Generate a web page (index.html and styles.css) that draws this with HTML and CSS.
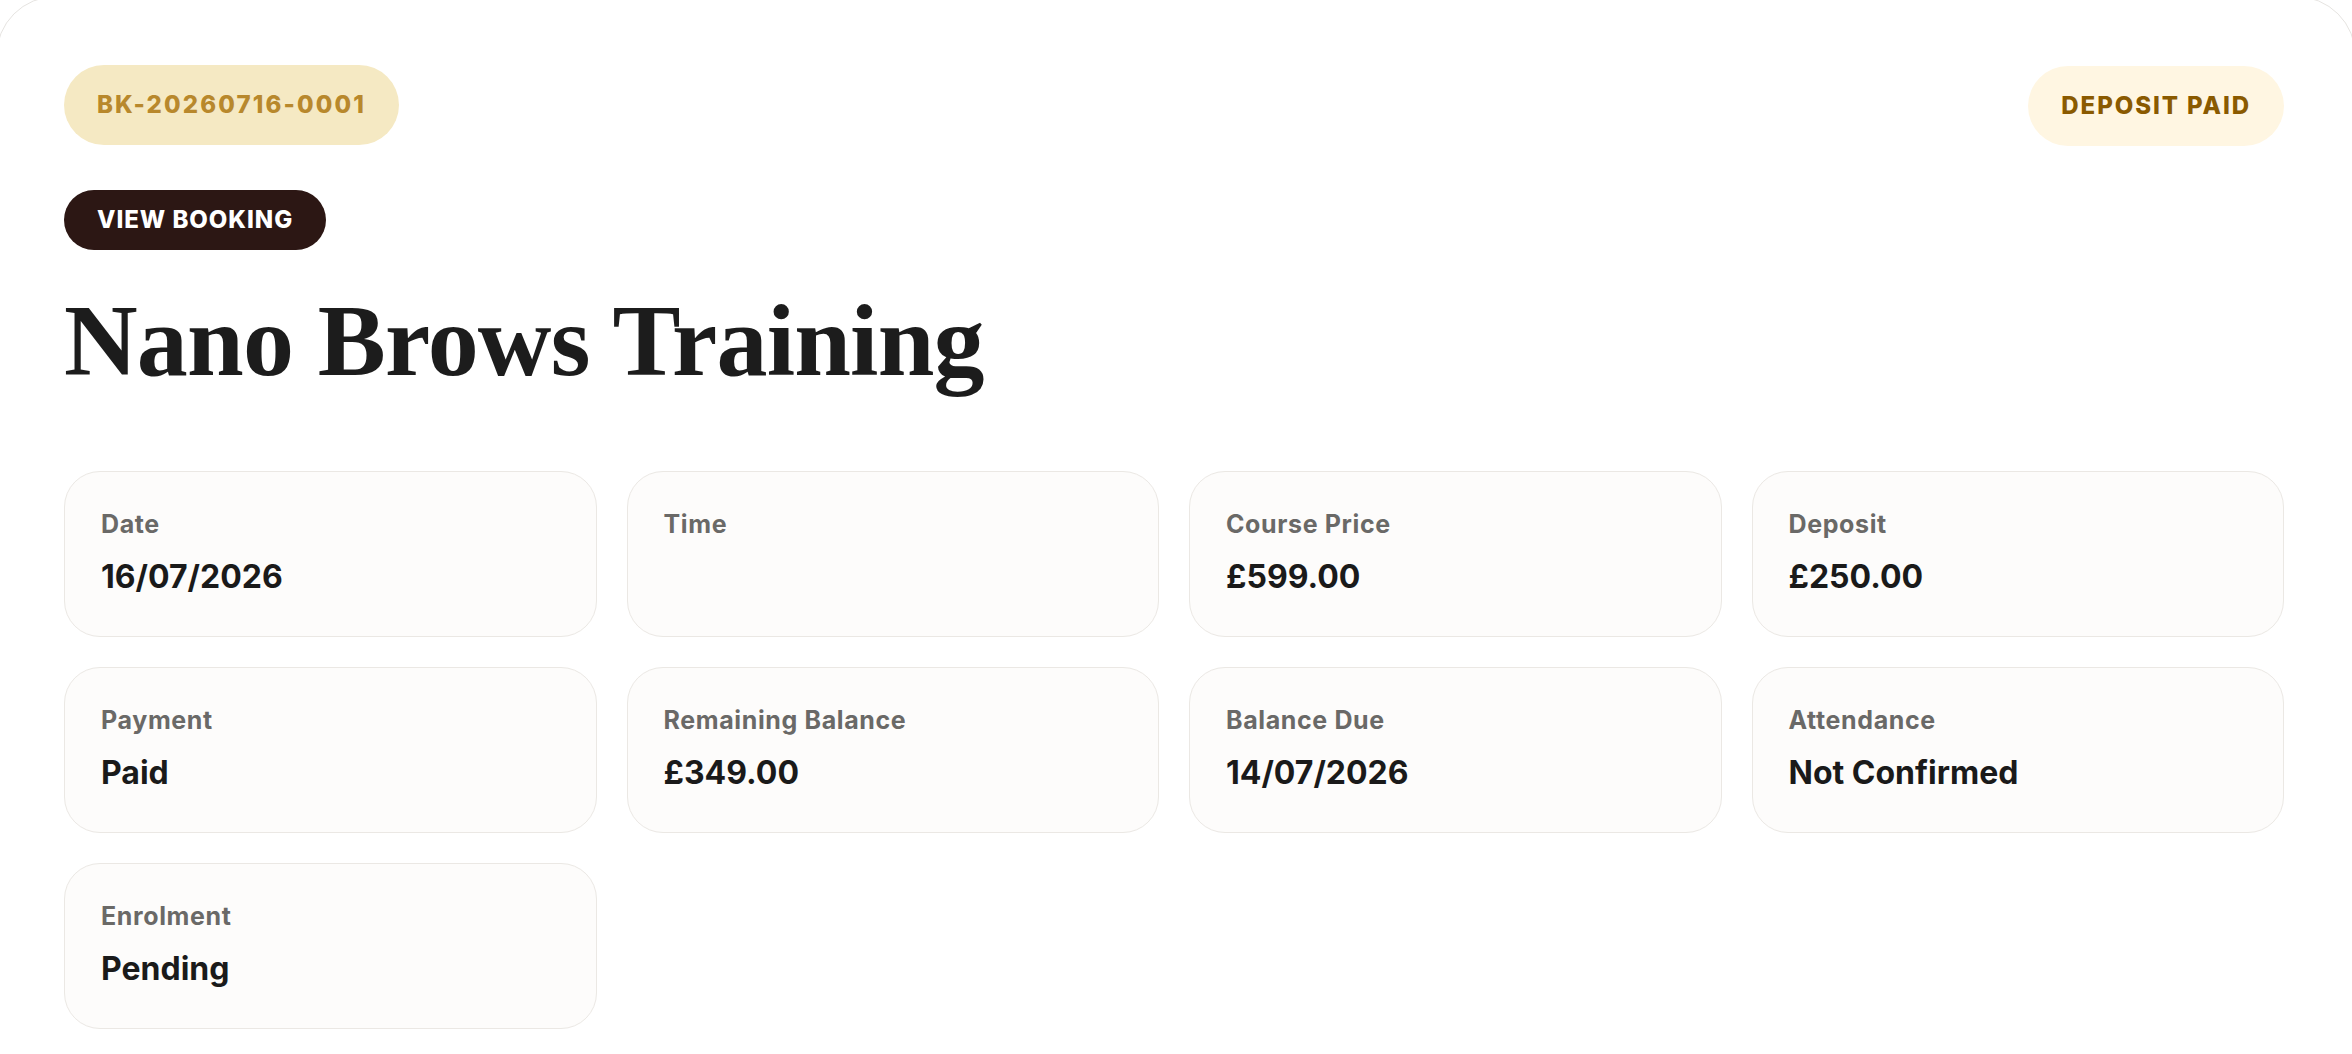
FILE: index.html
```html
<!DOCTYPE html>
<html lang="en">
<head>
<meta charset="utf-8">
<title>Booking</title>
<link rel="stylesheet" href="styles.css">
</head>
<body>
<div class="card">
  <div class="top">
    <span class="pill pill-ref">BK-20260716-0001</span>
    <span class="pill pill-status">DEPOSIT PAID</span>
  </div>
  <a class="btn" href="#">VIEW BOOKING</a>
  <h1 class="title">Nano Brows Training</h1>
  <div class="grid">
    <div class="item"><div class="label">Date</div><div class="value">16/07/2026</div></div>
    <div class="item"><div class="label">Time</div><div class="value"></div></div>
    <div class="item"><div class="label">Course Price</div><div class="value">£599.00</div></div>
    <div class="item"><div class="label">Deposit</div><div class="value">£250.00</div></div>
    <div class="item"><div class="label">Payment</div><div class="value">Paid</div></div>
    <div class="item"><div class="label">Remaining Balance</div><div class="value">£349.00</div></div>
    <div class="item"><div class="label">Balance Due</div><div class="value">14/07/2026</div></div>
    <div class="item"><div class="label">Attendance</div><div class="value">Not Confirmed</div></div>
    <div class="item"><div class="label">Enrolment</div><div class="value">Pending</div></div>
  </div>
</div>
</body>
</html>
```

FILE: styles.css
```css
html, body {
  margin: 0;
  padding: 0;
  background: #ffffff;
  overflow: hidden;
}

body {
  font-family: Inter, "Noto Sans", sans-serif;
  color: #1a1a1a;
}

.card {
  box-sizing: border-box;
  width: 2360px;
  min-height: 1100px;
  margin: -4px 0 0 -4px;
  border: 1px solid #e6e4e1;
  border-radius: 60px;
  padding: 68px 71px 64px 67px;
  background: #ffffff;
}

.top {
  display: flex;
  justify-content: space-between;
  align-items: flex-start;
}

.pill {
  display: inline-flex;
  align-items: center;
  height: 80px;
  padding: 0 33px;
  border-radius: 999px;
  font-size: 24px;
  font-weight: 800;
  line-height: 28px;
}

.pill-ref {
  background: #f5e9c3;
  color: #b8882c;
  letter-spacing: 0.09em;
}

.pill-status {
  background: #fff6e2;
  color: #8a5a00;
  margin-top: 1px;
  letter-spacing: 0.08em;
}

.btn {
  display: inline-flex;
  align-items: center;
  height: 60px;
  margin-top: 44px;
  padding: 0 33px;
  border-radius: 999px;
  background: #2c1714;
  color: #ffffff;
  text-decoration: none;
  font-size: 24px;
  font-weight: 800;
  letter-spacing: 0.04em;
  line-height: 28px;
}

.title {
  margin: 34px 0 0;
  font-family: "Liberation Serif", "DejaVu Serif", serif;
  font-weight: 700;
  font-size: 102px;
  letter-spacing: -0.008em;
  line-height: 113px;
  color: #1c1c1c;
}

.grid {
  margin-top: 74px;
  display: grid;
  grid-template-columns: repeat(4, 1fr);
  gap: 30px;
}

.item {
  border: 1px solid #ebe8e4;
  border-radius: 36px;
  background: #fdfcfb;
  padding: 34px 36px 35px;
}

.label {
  font-size: 25px;
  font-weight: 700;
  letter-spacing: 0.025em;
  line-height: 36px;
  color: #6a6967;
}

.value {
  margin-top: 11px;
  font-size: 32px;
  font-weight: 700;
  line-height: 48px;
  min-height: 48px;
  color: #1a1a1a;
}
```
